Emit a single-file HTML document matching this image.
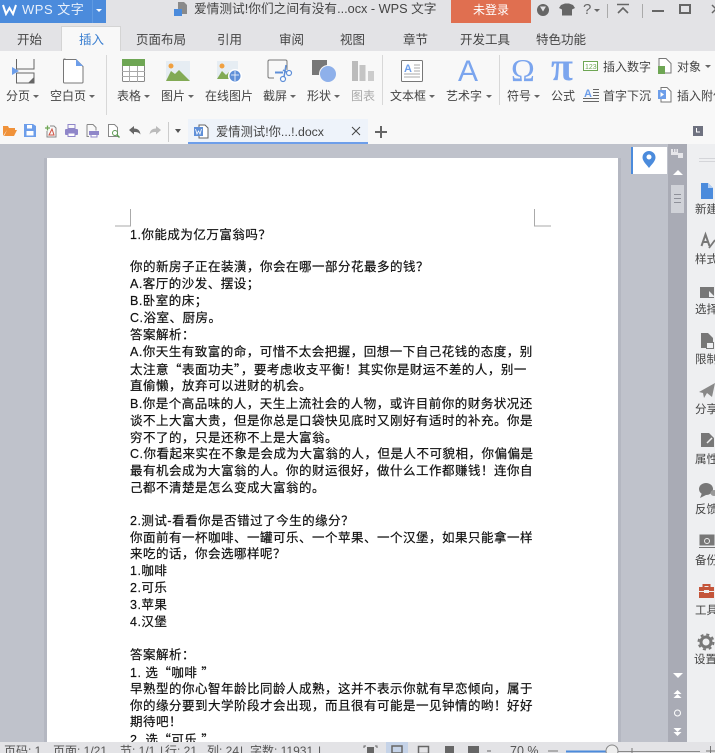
<!DOCTYPE html>
<html><head><meta charset="utf-8">
<style>
html,body{margin:0;padding:0}
body{width:715px;height:753px;overflow:hidden;position:relative;background:#bfc2cb;font-family:"Liberation Sans","Noto Sans CJK SC",sans-serif;color:#333}
div,span.p,svg{position:absolute}
.t{white-space:nowrap;font-size:12px;line-height:16px;color:#444}
.tab{white-space:nowrap;font-size:12.5px;line-height:16px;color:#444;top:32px}
.l{white-space:nowrap;left:130px;margin-top:1px;font-size:12.5px;letter-spacing:.5px;line-height:16px;color:#111;-webkit-text-stroke:.2px #111;font-family:"Liberation Sans","WenQuanYi Zen Hei",sans-serif}
.q{font-family:"Noto Sans CJK SC",sans-serif}
.s{white-space:nowrap;font-size:11.5px;line-height:14px;color:#444;left:695px}
.a{width:0;height:0;border-left:3px solid transparent;border-right:3px solid transparent;border-top:3px solid #666}
.sep{width:1px;background:#d8d8d8}
.b{white-space:nowrap;font-size:12px;line-height:16px;color:#555;top:1px}
</style></head><body>
<div style="left:0;top:0;width:715px;height:51px;background:#e3e3e6"></div>
<div style="left:0;top:51px;width:715px;height:93px;background:#f8f8f8"></div>
<div style="left:0;top:0;width:106px;height:23px;background:#4b8bdc"></div>
<div style="left:92px;top:0;width:1px;height:23px;background:#5f9ae2"></div>
<svg style="left:2px;top:4px" width="15" height="12"><path d="M1 1L4 10L7.500 4L11 10L14 1" fill="none" stroke="#fff" stroke-width="2"/></svg>
<div class="t" style="left:22px;top:1px;color:#e8f0fb;font-size:13px;letter-spacing:.5px;line-height:18px">WPS 文字</div>
<div class="a" style="left:96px;top:9px;border-top-color:#fff"></div>
<svg style="left:173px;top:1px" width="16" height="16"><path d="M5 1h6l3 3v9H5z" fill="#8a8a8a"/><rect x="1" y="8" width="8" height="7" fill="#4b8bdc"/></svg>
<div class="t" style="left:194px;top:1px;font-size:12.700px;line-height:17px">爱情测试!你们之间有没有...ocx - WPS 文字</div>
<div style="left:451px;top:0;width:80px;height:23px;background:#e06f50"></div>
<div class="t" style="left:473px;top:1px;color:#fff;font-size:12px;line-height:18px">未登录</div>
<svg style="left:530px;top:0" width="185" height="20">
<circle cx="13" cy="10" r="6" fill="#666"/><path d="M10 6.500l3 5 3-5z" fill="#e3e3e6"/>
<path d="M31 5l4-1.500h4l4 1.500 2 3-3 1.500v6H32V9.500l-3-1.500z" fill="#666"/>
<path d="M77.500 4v14M112.500 4v14" stroke="#aaa"/>
<path d="M87 4.500h12M88 13l5-5 5 5" fill="none" stroke="#666" stroke-width="1.600"/>
<path d="M122 11h12" stroke="#666" stroke-width="2"/>
<rect x="150" y="5" width="10" height="8" fill="none" stroke="#666" stroke-width="2"/>
<path d="M182 5l8 8M190 5l-8 8" stroke="#666" stroke-width="1.500"/>
</svg>
<div class="t" style="left:583px;top:1px;font-size:15px;line-height:18px;color:#666">?</div>
<div class="a" style="left:594px;top:9px"></div>

<div style="left:61px;top:26px;width:60px;height:25px;background:#f8f8f8;border:1px solid #d4d4d4;border-bottom:0;box-sizing:border-box"></div>
<div class="tab" style="left:17px">开始</div>
<div class="tab" style="left:79px;color:#3b7fd0">插入</div>
<div class="tab" style="left:136px">页面布局</div>
<div class="tab" style="left:217px">引用</div>
<div class="tab" style="left:279px">审阅</div>
<div class="tab" style="left:340px">视图</div>
<div class="tab" style="left:403px">章节</div>
<div class="tab" style="left:460px">开发工具</div>
<div class="tab" style="left:536px">特色功能</div>

<div class="sep" style="left:106px;top:55px;height:60px"></div>
<div class="sep" style="left:382px;top:55px;height:50px"></div>
<div class="sep" style="left:499px;top:55px;height:50px"></div>

<svg style="left:0;top:0" width="715" height="110">
<!-- page break -->
<path d="M16.500 59v10H34V59M16.500 73H34V83H16.500V73" fill="none" stroke="#666"/><path d="M28 83h6v-6z" fill="#666"/><path d="M12 67l7 4-7 4z" fill="#6d9eea"/>
<!-- blank page -->
<path d="M64 59.500h12l7 7V82a1 1 0 0 1-1 1H64.500a1 1 0 0 1-1-1V60a1 1 0 0 1 1-1z" fill="#fff" stroke="#777"/><path d="M76 59l7 7h-7z" fill="#6d9eea"/>
<!-- table -->
<rect x="122.500" y="59.500" width="22" height="22" rx="1" fill="#fff" stroke="#888"/><rect x="122" y="59" width="23" height="7" fill="#6ea654"/><path d="M122 71.500h23M122 76.500h23M129.500 66v16M137.500 66v16" stroke="#aaa"/>
<!-- picture -->
<rect x="166" y="61" width="24" height="20" fill="#e6edf3"/><circle cx="171" cy="66" r="2.500" fill="#f0a040"/><path d="M166 81l5-10 4 3 4-4 11 11z" fill="#82aa55"/>
<!-- online picture -->
<rect x="217" y="61" width="21" height="18" fill="#e6edf3"/><circle cx="222" cy="66" r="2.500" fill="#f0a040"/><path d="M217 79l5-8 4 4 3-3 6 7z" fill="#82aa55"/><circle cx="235" cy="76" r="7" fill="#fff"/><circle cx="235" cy="76" r="5.500" fill="#5f8fd8"/><path d="M231 75h8M235 71v10" stroke="#fff" stroke-width=".8"/>
<!-- screenshot -->
<path d="M274 78h-4.500a1.500 1.500 0 0 1-1.500-1.500v-15a1.500 1.500 0 0 1 1.500-1.500h16a1.500 1.500 0 0 1 1.500 1.500V70" fill="none" stroke="#777"/><path d="M275 72.500h8" stroke="#5f8fd8" stroke-width="2"/><path d="M286 65l-2 12M283 70l5 3" fill="none" stroke="#5f8fd8" stroke-width="1.500"/><circle cx="289" cy="73" r="2.500" fill="#fff" stroke="#5f8fd8" stroke-width="1.200"/><circle cx="283" cy="79" r="2.500" fill="#fff" stroke="#5f8fd8" stroke-width="1.200"/>
<!-- shape -->
<rect x="312" y="60" width="15" height="15" fill="#777"/><circle cx="328" cy="74" r="9" fill="#f8f8f8"/><circle cx="328" cy="74" r="8" fill="#8eb0ea"/>
<!-- chart -->
<rect x="352" y="61" width="6" height="20" fill="#bbb"/><rect x="359.500" y="65" width="6" height="16" fill="#c4c4c4"/><rect x="368" y="71" width="6" height="10" fill="#ccc"/>
<!-- text box -->
<rect x="401.500" y="60.500" width="21" height="21" rx="1" fill="#fff" stroke="#777"/><path d="M414 65h6M414 68h6M414 71h6M404 74h16M404 77h16" stroke="#aaa"/>
<text x="404" y="72" font-size="11" font-weight="bold" fill="#6d9eea" font-family="Liberation Sans">A</text>
<text x="458" y="81" font-size="30" fill="#7ba5ee" font-family="Liberation Sans">A</text>
<text x="511" y="81" font-size="32" fill="#7ba5ee" font-family="Liberation Serif">Ω</text>
<text x="551" y="80" font-size="40" font-weight="bold" fill="#7ba5ee" font-family="Liberation Serif">π</text>
<rect x="583.500" y="61.500" width="14" height="9" fill="#fff" stroke="#6ea654"/>
<text x="585" y="69" font-size="7" fill="#6ea654" font-family="Liberation Sans">123</text>
<path d="M659 58.500h7l5 5V73h-12z" fill="#fff" stroke="#777"/><rect x="658" y="66" width="7" height="8" fill="#6ea654"/>
<text x="584" y="97" font-size="11" font-weight="bold" fill="#6d9eea" font-family="Liberation Sans">A</text><path d="M593 89.500h6M593 92.500h6M593 95.500h6M583 98.500h16M583 101.500h16" stroke="#666" stroke-width=".9"/>
<path d="M661 87.500h6l4 4V102h-10z" fill="#fff" stroke="#777"/><rect x="658" y="90" width="8" height="9" fill="#6d9eea"/><path d="M660.500 92l3.500 2.500-3.500 2.500z" fill="#fff"/>
</svg>

<div class="t" style="left:6px;top:88px">分页</div><div class="a" style="left:33px;top:95px"></div>
<div class="t" style="left:50px;top:88px">空白页</div><div class="a" style="left:89px;top:95px"></div>
<div class="t" style="left:117px;top:88px">表格</div><div class="a" style="left:144px;top:95px"></div>
<div class="t" style="left:161px;top:88px">图片</div><div class="a" style="left:188px;top:95px"></div>
<div class="t" style="left:205px;top:88px">在线图片</div>
<div class="t" style="left:263px;top:88px">截屏</div><div class="a" style="left:290px;top:95px"></div>
<div class="t" style="left:307px;top:88px">形状</div><div class="a" style="left:334px;top:95px"></div>
<div class="t" style="left:351px;top:88px;color:#aaa">图表</div>
<div class="t" style="left:390px;top:88px">文本框</div><div class="a" style="left:429px;top:95px"></div>
<div class="t" style="left:446px;top:88px">艺术字</div><div class="a" style="left:486px;top:95px"></div>
<div class="t" style="left:507px;top:88px">符号</div><div class="a" style="left:534px;top:95px"></div>
<div class="t" style="left:551px;top:88px">公式</div>
<div class="t" style="left:603px;top:59px">插入数字</div>
<div class="t" style="left:603px;top:88px">首字下沉</div>
<div class="t" style="left:677px;top:59px">对象</div><div class="a" style="left:705px;top:65px"></div>
<div class="t" style="left:677px;top:88px">插入附件</div>

<svg style="left:0;top:120px" width="182" height="22">
<path d="M3 16V6h5l1 2h6v2H7l-3 6h10l3-6H7z" fill="#f0923a"/>
<path d="M24 4h9l3 2v11H24z" fill="#6d9eea"/><rect x="26.500" y="11" width="7" height="4.500" fill="#fff"/><rect x="27" y="5" width="5" height="3.500" fill="#fff"/>
<path d="M50 6h4l2 2v9H47v-6" fill="none" stroke="#888"/><path d="M45 8h5M47.500 5.500v5" stroke="#6ea654" stroke-width="1.300"/><path d="M49 15l3-6 2 6z" fill="none" stroke="#d05040"/>
<rect x="65" y="9" width="13" height="6" rx="1" fill="#8f86c9"/><rect x="68" y="4.500" width="7" height="4" fill="none" stroke="#8f86c9"/><rect x="68" y="13" width="7" height="3.500" fill="#fff" stroke="#8f86c9"/>
<path d="M87 4.500h6l3 3v3M87 4.500v12h2" fill="none" stroke="#888"/><rect x="89" y="11" width="10" height="4" fill="#8f86c9"/><rect x="91" y="14.500" width="6" height="2.500" fill="#fff" stroke="#8f86c9"/>
<path d="M108.500 4.500h6l3 3v9h-9z" fill="#fff" stroke="#888"/><circle cx="115" cy="13" r="2.500" fill="#fff" stroke="#5a9a50"/><path d="M117 15l2.500 2.500" stroke="#5a9a50" stroke-width="1.500"/>
<path d="M129 10l5-4v2.500c4 0 6 2 6.500 6-1.500-2-3-2.500-6.500-2.500v2.500z" fill="#666"/>
<path d="M161 10l-5-4v2.500c-4 0-6 2-6.500 6 1.500-2 3-2.500 6.500-2.500v2.500z" fill="#bbb"/>
<path d="M168.500 2v20" stroke="#ccc"/>
</svg>
<div class="a" style="left:175px;top:129px;border-left-width:3px;border-right-width:3px;border-top:4px solid #555"></div>
<div style="left:188px;top:119px;width:180px;height:25px;background:#eef3fa;border-bottom:2px solid #6d9eea;box-sizing:border-box"></div>
<svg style="left:193px;top:123px" width="17" height="17"><path d="M6 2h6l3 3v10H6z" fill="#fff" stroke="#666"/><rect x="1" y="4" width="9" height="9" fill="#5f8fd8"/><path d="M2.500 6l1.500 5 1.500-3 1.500 3 1.500-5" stroke="#fff" fill="none" stroke-width=".8"/></svg>
<div class="t" style="left:216px;top:124px;font-size:12.300px;line-height:16px">爱情测试!你...!.docx</div>
<svg style="left:350px;top:125px" width="40" height="14"><path d="M2 2l8 8M10 2l-8 8" stroke="#444"/><path d="M31 1v12M25 7h12" stroke="#666" stroke-width="2"/></svg>
<div style="left:693px;top:126px;width:10px;height:10px;background:#6f7280"></div>
<svg style="left:696px;top:128px" width="5" height="6"><path d="M.500 0v4H4" fill="none" stroke="#fff"/></svg>

<div style="left:47px;top:158px;width:571px;height:584px;background:#fff"></div>
<svg style="left:112px;top:208px" width="440" height="20"><path d="M18.500 1v17H3M422.500 1v17H439" fill="none" stroke="#aaa"/></svg>

<div class="l" style="top:226px">1.你能成为亿万富翁吗？</div>
<div class="l" style="top:258px">你的新房子正在装潢，你会在哪一部分花最多的钱？</div>
<div class="l" style="top:275px">A.客厅的沙发、摆设；</div>
<div class="l" style="top:292px">B.卧室的床；</div>
<div class="l" style="top:309px">C.浴室、厨房。</div>
<div class="l" style="top:326px">答案解析：</div>
<div class="l" style="top:343px">A.你天生有致富的命，可惜不太会把握，回想一下自己花钱的态度，别</div>
<div class="l" style="top:360px">太注意<span class="q">“</span>表面功夫<span class="q">”</span>，要考虑收支平衡！其实你是财运不差的人，别一</div>
<div class="l" style="top:377px">直偷懒，放弃可以进财的机会。</div>
<div class="l" style="top:395px">B.你是个高品味的人，天生上流社会的人物，或许目前你的财务状况还</div>
<div class="l" style="top:412px">谈不上大富大贵，但是你总是口袋快见底时又刚好有适时的补充。你是</div>
<div class="l" style="top:429px">穷不了的，只是还称不上是大富翁。</div>
<div class="l" style="top:445px">C.你看起来实在不象是会成为大富翁的人，但是人不可貌相，你偏偏是</div>
<div class="l" style="top:462px">最有机会成为大富翁的人。你的财运很好，做什么工作都赚钱！连你自</div>
<div class="l" style="top:479px">己都不清楚是怎么变成大富翁的。</div>
<div class="l" style="top:512px">2.测试-看看你是否错过了今生的缘分？</div>
<div class="l" style="top:529px">你面前有一杯咖啡、一罐可乐、一个苹果、一个汉堡，如果只能拿一样</div>
<div class="l" style="top:545px">来吃的话，你会选哪样呢？</div>
<div class="l" style="top:562px">1.咖啡</div>
<div class="l" style="top:579px">2.可乐</div>
<div class="l" style="top:596px">3.苹果</div>
<div class="l" style="top:613px">4.汉堡</div>
<div class="l" style="top:646px">答案解析：</div>
<div class="l" style="top:663px">1. 选<span class="q">“</span>咖啡 <span class="q">”</span></div>
<div class="l" style="top:680px">早熟型的你心智年龄比同龄人成熟，这并不表示你就有早恋倾向，属于</div>
<div class="l" style="top:697px">你的缘分要到大学阶段才会出现，而且很有可能是一见钟情的哟！好好</div>
<div class="l" style="top:713px">期待吧！</div>
<div class="l" style="top:730px;height:11px;overflow:hidden">2. 选<span class="q">“</span>可乐 <span class="q">”</span></div>

<div style="left:44px;top:158px;width:3px;height:584px;background:#b4b7c1"></div>
<div style="left:618px;top:158px;width:3px;height:584px;background:#b4b7c1"></div>
<div style="left:631px;top:147px;width:36px;height:27px;background:#fff;border-left:2px solid #4b8bdc;box-sizing:border-box"></div>
<svg style="left:641px;top:150px" width="16" height="20"><path d="M8 1a6.500 6.500 0 0 1 6.500 6.500C14.500 11 11 14 8 18 5 14 1.500 11 1.500 7.500A6.500 6.500 0 0 1 8 1z" fill="#4b8bdc"/><circle cx="8" cy="7" r="2.500" fill="#fff"/></svg>
<div style="left:668px;top:144px;width:19px;height:598px;background:#a9abb5"></div>
<svg style="left:671px;top:149px" width="12" height="10"><path d="M0 0h7v6H0zM7 4h5v5H7z" fill="#e6e6ea"/><path d="M2.500 0v3M5 0v3" stroke="#a9abb5"/></svg>
<div style="left:673px;top:170px;width:0;height:0;border-left:5px solid transparent;border-right:5px solid transparent;border-bottom:5px solid #fff"></div>
<div style="left:671px;top:185px;width:13px;height:28px;background:#d0d2d8"></div>
<svg style="left:673px;top:193px" width="9" height="12"><path d="M1 1.500h7M1 5.500h7M1 9.500h7" stroke="#8e9099"/></svg>
<div style="left:673px;top:673px;width:0;height:0;border-left:5px solid transparent;border-right:5px solid transparent;border-top:5px solid #fff"></div>
<svg style="left:672px;top:689px" width="11" height="50"><path d="M5.500 1l4 4h-8zM5.500 5l4 4h-8z" fill="#fff"/><circle cx="5.500" cy="24" r="3" fill="none" stroke="#fff"/><path d="M1.500 39h8l-4 4zM1.500 43h8l-4 4z" fill="#fff"/></svg>

<div style="left:687px;top:144px;width:28px;height:598px;background:#eeeff1"></div>
<svg style="left:687px;top:0" width="28" height="742">
<path d="M12 158.500h16M12 161.500h16" stroke="#d4d5d9"/>
<!-- new -->
<path d="M14 183h7l5 5v11H14z" fill="#4b8bdc"/><path d="M21 183v5h5z" fill="#b6d0f2"/>
<!-- style -->
<path d="M14.500 246l4-11.500 4 11.500M16 242h5" fill="none" stroke="#777" stroke-width="2"/><path d="M22 248l6-8" stroke="#777" stroke-width="1.800"/>
<!-- select -->
<rect x="13" y="287" width="14" height="11" fill="#777"/><path d="M22 291l6 6h-6z" fill="#eeeff1"/>
<!-- limit -->
<path d="M14 333h7l5 5v10H14z" fill="#777"/><rect x="19.500" y="342.500" width="7" height="6" fill="#eeeff1" stroke="#777"/><path d="M21 342v-1.500a2 2 0 0 1 4 0V342" fill="none" stroke="#777"/>
<!-- share -->
<path d="M12 392l16-9-3 14-5-4-3 5-1-5z" fill="#888"/>
<!-- props -->
<path d="M14 433h8l5 5v9H14z" fill="#777"/><path d="M20 443l5-5" stroke="#eee" stroke-width="1.500"/>
<!-- feedback -->
<ellipse cx="19" cy="489" rx="7" ry="6" fill="#777"/><path d="M15 493l-2 5 6-3z" fill="#777"/><ellipse cx="27" cy="493" rx="3.500" ry="3" fill="#999"/>
<!-- backup -->
<rect x="12.500" y="534.500" width="15" height="11" fill="#777"/><path d="M12 547.500h16" stroke="#777"/><circle cx="20" cy="541" r="2.500" fill="none" stroke="#eee"/>
<!-- tools -->
<rect x="12" y="587" width="15" height="11" fill="#c4553a"/><path d="M16.500 587v-2h6v2" fill="none" stroke="#c4553a" stroke-width="2"/><path d="M12 591.500h15" stroke="#eee"/><rect x="17" y="590" width="5" height="3" fill="#eee"/>
<!-- gear -->
<circle cx="19" cy="642" r="5" fill="none" stroke="#777" stroke-width="3"/><circle cx="19" cy="642" r="7.500" fill="none" stroke="#777" stroke-width="2" stroke-dasharray="3 2.900"/>
</svg>
<div class="s" style="top:203px">新建</div>
<div class="s" style="top:253px">样式</div>
<div class="s" style="top:303px">选择</div>
<div class="s" style="top:353px">限制</div>
<div class="s" style="top:403px">分享</div>
<div class="s" style="top:453px">属性</div>
<div class="s" style="top:503px">反馈</div>
<div class="s" style="top:554px">备份</div>
<div class="s" style="top:604px">工具</div>
<div class="s" style="top:653px;left:694px">设置</div>

<div style="left:0;top:742px;width:715px;height:11px;background:#e3e3e6;overflow:hidden">
<div class="b" style="left:4px">页码: 1</div>
<div class="b" style="left:53px">页面: 1/21</div>
<div class="b" style="left:120px">节: 1/1</div>
<div class="b" style="left:160px">|</div>
<div class="b" style="left:165px">行: 21</div>
<div class="b" style="left:207px">列: 24</div>
<div class="b" style="left:240px">|</div>
<div class="b" style="left:250px">字数: 11931</div>
<div class="b" style="left:318px">|</div>
<div style="left:386px;top:0;width:22px;height:11px;background:#c5d3e8"></div>
<svg style="left:355px;top:0" width="150" height="11" fill="#666"><path d="M9 6V4h2M20 4h2v2" fill="none" stroke="#666"/><rect x="12" y="5" width="7" height="6"/><rect x="37" y="4" width="10" height="7" fill="none" stroke="#666" stroke-width="1.500"/><rect x="63.500" y="4.500" width="10" height="7" fill="none" stroke="#666" stroke-width="1.500"/><rect x="90" y="4" width="9" height="7"/><rect x="113" y="4" width="11" height="7"/><path d="M132 9h4" stroke="#666"/></svg>
<div class="b" style="left:510px;font-size:12.500px">70 %</div>
<svg style="left:545px;top:0" width="170" height="11"><path d="M3 9h10" stroke="#777"/><path d="M21 9.500h134" stroke="#888"/><path d="M21 9.500h40" stroke="#4b8bdc" stroke-width="2"/><circle cx="67" cy="9" r="6" fill="#eee" stroke="#888"/><path d="M87 6v6M161 9h9M165.500 4v7" stroke="#777"/></svg>
</div>
</body></html>
